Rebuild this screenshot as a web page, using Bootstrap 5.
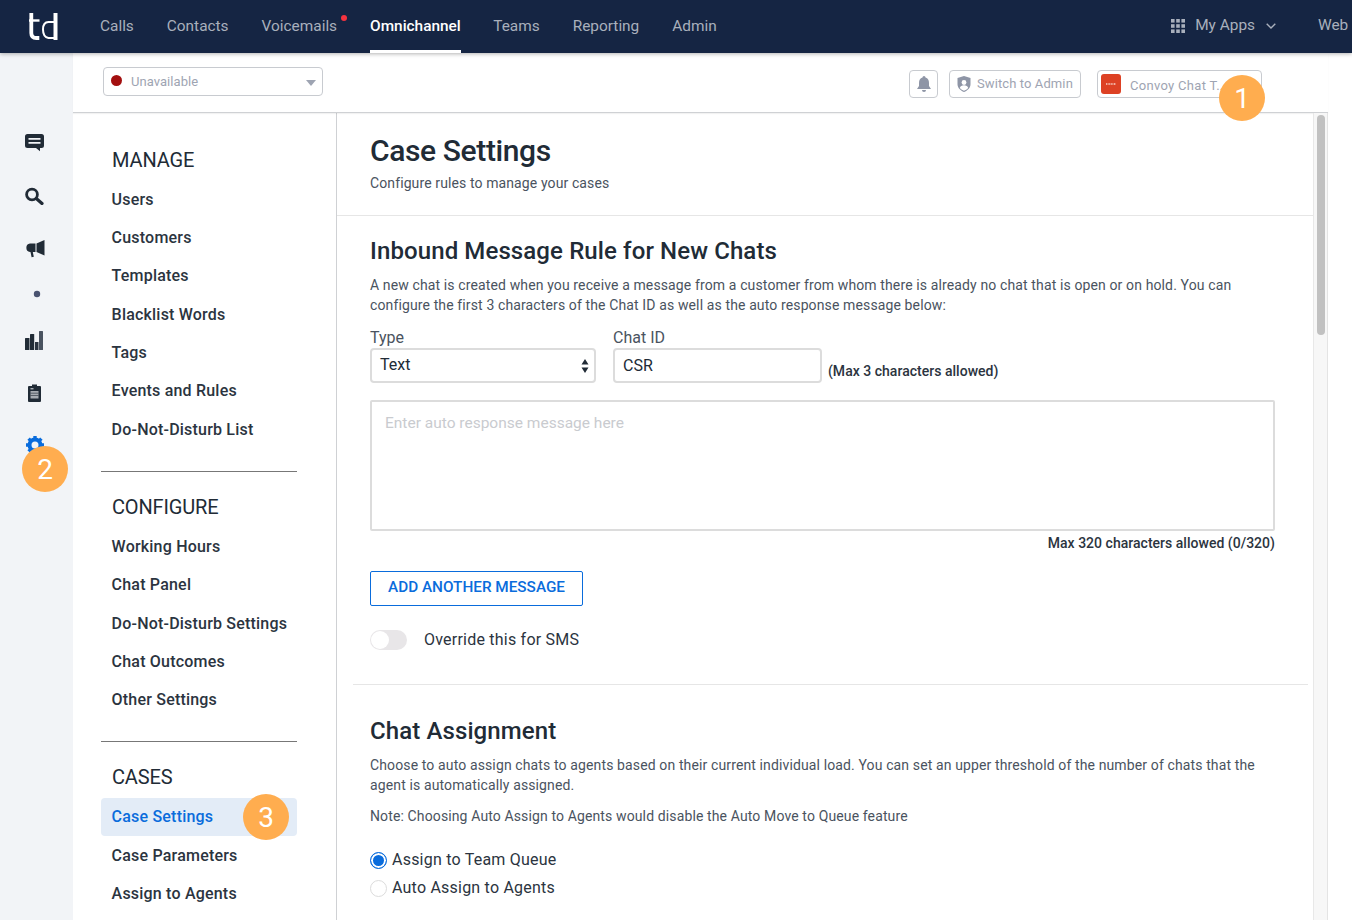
<!DOCTYPE html>
<html lang="en">
<head>
<meta charset="utf-8">
<title>Case Settings</title>
<link href="https://cdn.jsdelivr.net/npm/bootstrap@5.3.0/dist/css/bootstrap.min.css" rel="stylesheet">
<style>
html,body{height:920px;overflow:hidden;background:#fff;font-family:Roboto,"Liberation Sans",sans-serif;color:#212b36}
.td-top{height:53px;background:#152543;box-shadow:0 1px 4px rgba(0,0,0,.3);padding:0;position:relative;z-index:3}
.td-logo{width:100px;padding-left:28px;display:flex;align-items:center;height:53px}
.td-logo svg{margin-top:-1px}
.td-link{color:#a9b0bc;font-size:15.4px;line-height:52px;height:53px;text-decoration:none;margin-right:33px;position:relative;display:block}
.td-link.on{color:#fff;font-weight:500;font-size:15.4px;margin-right:32.5px}
.td-link.on::after{content:"";position:absolute;left:0;right:0;bottom:0;height:3px;background:#fff}
.td-dot{position:absolute;width:6px;height:6px;background:#f5333f;border-radius:50%;top:15px;right:-10px}
.td-apps{margin-left:auto;display:flex;align-items:center;color:#a9b0bc;font-size:15.4px;height:53px;padding-bottom:1px}
.td-apps-ic{margin-right:10px}
.td-chev{margin-left:11px}
.td-web{color:#a9b0bc;font-size:15.4px;margin-left:42px;width:34px;padding-bottom:1px;white-space:nowrap}
.td-body{height:867px}
.td-rail{width:73px;flex:none;background:#f2f4f7;position:relative}
.td-rail svg{position:absolute;left:24px}
.td-work{width:1255px;flex:none;display:flex;flex-direction:column;min-height:0}
.td-tool{height:60px;flex:none;border-bottom:1px solid #cfd1d4;width:1255px;position:relative;box-shadow:0 1px 1px rgba(0,0,0,.05)}
.td-status{position:absolute;left:30px;top:14px;width:220px;height:29px;border:1px solid #c8cbd0;border-radius:4px;display:flex;align-items:center;padding-left:7px;color:#9ea4b2;font-size:13px;letter-spacing:.05px}
.td-status i{width:11px;height:11px;border-radius:50%;background:#a30f0f;margin-right:9px;margin-top:-2px}
.td-status b{position:absolute;right:6px;top:12px;border:5.5px solid transparent;border-top:6px solid #9ea4b2;border-bottom:0}
.td-tbtn{position:absolute;top:17px;height:28px;border:1px solid #c8cbd0;border-radius:4px;display:flex;align-items:center;color:#9ea4b2;font-size:13px;letter-spacing:.1px;white-space:nowrap}
.td-cols{flex:1;min-height:0;width:1255px}
.td-side{width:264px;flex:none;border-right:1px solid #cfd1d4;padding:0 39px 0 28px}
.td-h{font-size:20px;line-height:24px;margin:0;color:#212b36;padding-left:11px;font-weight:400;letter-spacing:-.15px}
.td-it{display:block;font-size:16px;font-weight:500;height:38.4px;line-height:38.4px;padding-left:10.6px;color:#2b3440;text-decoration:none;border-radius:4px;letter-spacing:.2px}
.td-it.on{background:#e3ecf7;color:#0a6cdc;}
.td-rule{border-top:1px solid #777;margin:0}
.td-main{width:976px;flex:none;overflow:hidden}
.td-track{width:15px;flex:none;background:#f7f7f7;border-left:1px solid #e8e8e8;border-right:1px solid #e4e4e4;position:relative}
.td-thumb{position:absolute;left:3px;top:2px;width:8px;height:220px;border-radius:4px;background:#c1c1c1}
.td-head{height:103px;border-bottom:1px solid #e6e6e6;padding:20px 33px 0}
.td-title{font-size:30px;line-height:36px;font-weight:500;margin:0;letter-spacing:-.38px;color:#212b36}
.td-sub{font-size:14px;line-height:20px;margin:4px 0 0;color:#4a5360;letter-spacing:.11px}
.td-sec{padding:0 38px 0 33px}
.td-h2{font-size:24px;line-height:30px;font-weight:500;margin:0;color:#212b36;letter-spacing:.11px}
.td-p{font-size:14px;line-height:20px;color:#4a5360;margin:0;letter-spacing:.125px}
.td-lab{font-size:16px;line-height:20px;color:#4a5360;display:block;margin-bottom:0}
.td-sel{width:226px;height:35px;border:2px solid #dcdcdc;border-radius:4px;display:flex;align-items:center;padding:0 8px 2px;font-size:16px;position:relative;color:#212b36}
.td-inp{width:209px;height:35px;border:2px solid #dcdcdc;border-radius:4px;font-size:16px;padding:0 8px;color:#212b36;font-family:inherit;outline:0;display:block}
.td-area{width:905px;height:131px;border:2px solid #dcdcdc;border-radius:2px;display:block;padding:10px 13px;font-size:15.5px;line-height:22px;font-family:inherit;resize:none;outline:0}
.td-area::placeholder{color:#c9cbcf;opacity:1}
.td-note{font-size:14px;font-weight:500;line-height:20px;color:#2b3440;letter-spacing:.02px}
.td-add{width:213px;height:35px;border:1px solid #0a6cdc;border-radius:2px;background:#fff;color:#0a6cdc;font-size:15.3px;font-weight:500;padding:0 0 2px;text-transform:uppercase}
.td-tog{width:37px;height:20px;border-radius:10px;background:#e8e6e8;position:relative;display:block}
.td-tog::after{content:"";position:absolute;left:1px;top:1px;width:18px;height:18px;border-radius:50%;background:#fff}
.td-big{font-size:16px;line-height:22px;color:#2b3440;letter-spacing:.22px}
.td-hr{border-top:1px solid #e6e6e6;margin:0 5px 0 16px}
.td-radio{width:17px;height:17px;border-radius:50%;border:1px solid #dcdcdc;display:inline-block;margin-right:5px;background:#fff;flex:none}
.td-radio.on{border-color:#0a6cdc;box-shadow:inset 0 0 0 2px #fff;background:#0a6cdc}
.td-pin{position:absolute;width:46px;height:46px;border-radius:50%;background:#ffad4f;color:#fff;font-size:28px;line-height:48px;text-align:center;z-index:5}
</style>
</head>
<body>
<nav class="td-top d-flex align-items-center">
  <div class="td-logo">
    <svg width="31" height="27" viewBox="0 0 31 27" fill="none" stroke="#fff"><path d="M3.300 0v20q0 5 5 5h3" stroke-width="3.800"/><path d="M1 7.500h10.500" stroke-width="2.400"/><path d="M26 9h-5.500q-5.500 0-5.500 7.500t5.500 8.500h5.500" stroke-width="2"/><path d="M27.500 0v27" stroke-width="4"/></svg>
  </div>
  <a class="td-link" href="#">Calls</a>
  <a class="td-link" href="#">Contacts</a>
  <a class="td-link" href="#">Voicemails<span class="td-dot"></span></a>
  <a class="td-link on" href="#">Omnichannel</a>
  <a class="td-link" href="#">Teams</a>
  <a class="td-link" href="#">Reporting</a>
  <a class="td-link" href="#">Admin</a>
  <div class="td-apps">
    <svg width="14" height="14" viewBox="0 0 14 14" fill="#a9b0bc" class="td-apps-ic"><rect width="3.600" height="3.600"/><rect x="5.200" width="3.600" height="3.600"/><rect x="10.400" width="3.600" height="3.600"/><rect y="5.200" width="3.600" height="3.600"/><rect x="5.200" y="5.200" width="3.600" height="3.600"/><rect x="10.400" y="5.200" width="3.600" height="3.600"/><rect y="10.400" width="3.600" height="3.600"/><rect x="5.200" y="10.400" width="3.600" height="3.600"/><rect x="10.400" y="10.400" width="3.600" height="3.600"/></svg>
    <span>My Apps</span>
    <svg width="10" height="6" viewBox="0 0 10 6" fill="none" stroke="#a9b0bc" stroke-width="1.400" class="td-chev"><path d="M.7.7 5 5 9.300.7"/></svg>
  </div>
  <div class="td-web">Web</div>
</nav>
<div class="td-body d-flex">
  <aside class="td-rail">
    <svg style="top:80px" width="21" height="19" viewBox="0 0 21 19"><path fill="#212b36" d="M3.500 1h14a2.500 2.500 0 0 1 2.500 2.500v9a2.500 2.500 0 0 1-2.500 2.500H16v3.200L12 15H3.500A2.500 2.500 0 0 1 1 12.500v-9A2.500 2.500 0 0 1 3.500 1z"/><path stroke="#f2f4f7" stroke-width="1.800" d="M4.500 5.800h12M4.500 9.800h12"/></svg>
    <svg style="top:133px" width="20" height="19" viewBox="0 0 20 19" fill="none" stroke="#212b36"><circle cx="8" cy="8.500" r="5.400" stroke-width="2.800"/><path d="M12.300 12.500l5.700 5" stroke-width="3.200" stroke-linecap="round"/></svg>
    <svg style="top:187px;left:25px" width="20" height="20" viewBox="0 0 20 20" fill="#212b36"><path d="M5 3.500h5.500V12H5a4.300 4.300 0 0 1 0-8.500z"/><path d="M11.500 3.500 19.500 0v15.500L11.500 12z"/><path d="M5.500 12h2.300l1 4.800-2.200.4z"/></svg>
    <svg style="top:237px;left:33px" width="8" height="8" viewBox="0 0 8 8"><circle cx="4" cy="4" r="3.200" fill="#4a5370"/></svg>
    <svg style="top:278px" width="20" height="19" viewBox="0 0 20 19"><rect x="1" y="7" width="4.500" height="12" rx=".5" fill="#212b36"/><rect x="6" y="3" width="4.200" height="16" rx=".5" fill="#212b36"/><rect x="11" y="11" width="3.500" height="8" fill="#2b3440"/><rect x="15" y="0" width="4" height="19" rx=".5" fill="#4a5360"/></svg>
    <svg style="top:330px;left:27px" width="15" height="19" viewBox="0 0 15 19"><path fill="#212b36" d="M2 3h3V1.500h5V3h3a1 1 0 0 1 1 1v14a1 1 0 0 1-1 1H2a1 1 0 0 1-1-1V4a1 1 0 0 1 1-1z"/><path fill="#a8acb2" d="M3.500 8h8v7.500h-8z"/><path stroke="#212b36" stroke-width=".6" d="M3.500 10.200h8M3.500 12.500h8"/><path stroke="#e2e4e8" d="M3.500 5.800h3"/></svg>
    <svg style="top:382px;left:25px" width="20" height="20" viewBox="0 0 20 20" fill="none"><circle cx="10" cy="10" r="5.500" stroke="#0a6cdc" stroke-width="4"/><path stroke="#0a6cdc" stroke-width="3.400" d="M10 1v3.500M10 15.500V19M1 10h3.500M15.500 10H19M3.600 3.600l2.300 2.300M14.100 14.100l2.300 2.300M3.600 16.400l2.300-2.300M14.100 5.900l2.300-2.300"/></svg>
  </aside>
  <div class="td-work">
    <div class="td-tool">
      <div class="td-status"><i></i>Unavailable<b></b></div>
      <div class="td-tbtn justify-content-center" style="left:836px;width:29px"><svg width="14" height="16" viewBox="0 0 14 16" fill="#8e95a6"><path d="M7 0a1.500 1.500 0 0 1 1.500 1.500C11 2.200 12 4.300 12 7v3l2 3H0l2-3V7c0-2.700 1-4.800 3.500-5.500A1.500 1.500 0 0 1 7 0z"/><path d="M5 14h4a2 2 0 0 1-4 0z"/></svg></div>
      <div class="td-tbtn" style="left:876px;width:132px;padding-left:7px"><svg width="14" height="16" viewBox="0 0 14 16" style="margin-right:6px"><path fill="#8e95a6" d="M7 0l6.500 2v6c0 4-3 6.500-6.500 8C3.500 14.500.5 12 .5 8V2z"/><circle cx="7" cy="6.500" r="2.400" fill="#fff"/><path fill="#fff" d="M2.800 12c.5-2 2-2.800 4.200-2.800s3.700.8 4.200 2.800C10 13.300 8.500 14.200 7 14.800c-1.500-.6-3-1.500-4.200-2.800z"/></svg>Switch to Admin</div>
      <div class="td-tbtn" style="left:1024px;width:165px;padding-left:3px;letter-spacing:.3px"><svg width="20" height="20" viewBox="0 0 20 20" style="margin-right:9px"><rect width="20" height="20" rx="3" fill="#dd4124"/><path stroke="#f7d5cb" stroke-width="1.500" stroke-dasharray="1 .6" d="M5 10h10"/></svg><span style="padding-top:3px">Convoy Chat T...</span></div>
    </div>
    <div class="td-cols d-flex">
      <aside class="td-side">
        <h3 class="td-h" style="padding-top:35px;height:59px">MANAGE</h3>
        <div style="margin-top:8.500px"><a class="td-it" href="#">Users</a><a class="td-it" href="#">Customers</a><a class="td-it" href="#">Templates</a><a class="td-it" href="#">Blacklist Words</a><a class="td-it" href="#">Tags</a><a class="td-it" href="#">Events and Rules</a><a class="td-it" href="#">Do-Not-Disturb List</a></div>
        <div class="td-rule" style="margin-top:21.500px"></div>
        <h3 class="td-h" style="margin-top:23px">CONFIGURE</h3>
        <div style="margin-top:9px"><a class="td-it" href="#">Working Hours</a><a class="td-it" href="#">Chat Panel</a><a class="td-it" href="#">Do-Not-Disturb Settings</a><a class="td-it" href="#">Chat Outcomes</a><a class="td-it" href="#">Other Settings</a></div>
        <div class="td-rule" style="margin-top:21px"></div>
        <h3 class="td-h" style="margin-top:23px">CASES</h3>
        <div style="margin-top:9px"><a class="td-it on" href="#">Case Settings</a><a class="td-it" style="margin-top:.6px" href="#">Case Parameters</a><a class="td-it" href="#">Assign to Agents</a></div>
      </aside>
      <main class="td-main">
        <div class="td-head">
          <h1 class="td-title">Case Settings</h1>
          <p class="td-sub">Configure rules to manage your cases</p>
        </div>
        <section class="td-sec" style="padding-top:20px;height:468px">
          <h2 class="td-h2">Inbound Message Rule for New Chats</h2>
          <p class="td-p" style="margin-top:9px">A new chat is created when you receive a message from a customer from whom there is already no chat that is open or on hold. You can configure the first 3 characters of the Chat ID as well as the auto response message below:</p>
          <div class="d-flex align-items-end" style="margin-top:13px">
            <div style="margin-right:17px"><label class="td-lab">Type</label>
              <div class="td-sel">Text<svg class="position-absolute" style="right:5px;top:9px" width="8" height="14" viewBox="0 0 8 14" fill="#212b36"><path d="M4 0l3.500 5.500H.5zM4 14l3.500-5.500H.5z"/></svg></div></div>
            <div><label class="td-lab">Chat ID</label><input class="td-inp" value="CSR"></div>
            <div class="td-note" style="margin-left:6px;padding-bottom:2px">(Max 3 characters allowed)</div>
          </div>
          <textarea class="td-area" style="margin-top:17px" placeholder="Enter auto response message here"></textarea>
          <div class="td-note text-end" style="width:905px;margin-top:2px">Max 320 characters allowed (0/320)</div>
          <button class="td-add d-block" style="margin-top:18px" type="button">Add another message</button>
          <div class="d-flex align-items-center" style="margin-top:23px"><span class="td-tog"></span><span class="td-big" style="margin-left:17px">Override this for SMS</span></div>
        </section>
        <div class="td-hr"></div>
        <section class="td-sec" style="padding-top:31px">
          <h2 class="td-h2">Chat Assignment</h2>
          <p class="td-p" style="margin-top:9px">Choose to auto assign chats to agents based on their current individual load. You can set an upper threshold of the number of chats that the agent is automatically assigned.</p>
          <p class="td-p" style="margin-top:11px">Note: Choosing Auto Assign to Agents would disable the Auto Move to Queue feature</p>
          <div class="d-flex align-items-center td-big" style="margin-top:23px"><span class="td-radio on"></span>Assign to Team Queue</div>
          <div class="d-flex align-items-center td-big" style="margin-top:6px"><span class="td-radio"></span>Auto Assign to Agents</div>
        </section>
      </main>
      <div class="td-track"><div class="td-thumb"></div></div>
    </div>
  </div>
</div>
<div class="td-pin" style="left:1219px;top:75px">1</div>
<div class="td-pin" style="left:22px;top:446px">2</div>
<div class="td-pin" style="left:243px;top:794px">3</div>
<script src="https://cdn.jsdelivr.net/npm/bootstrap@5.3.0/dist/js/bootstrap.bundle.min.js"></script>
</body>
</html>
